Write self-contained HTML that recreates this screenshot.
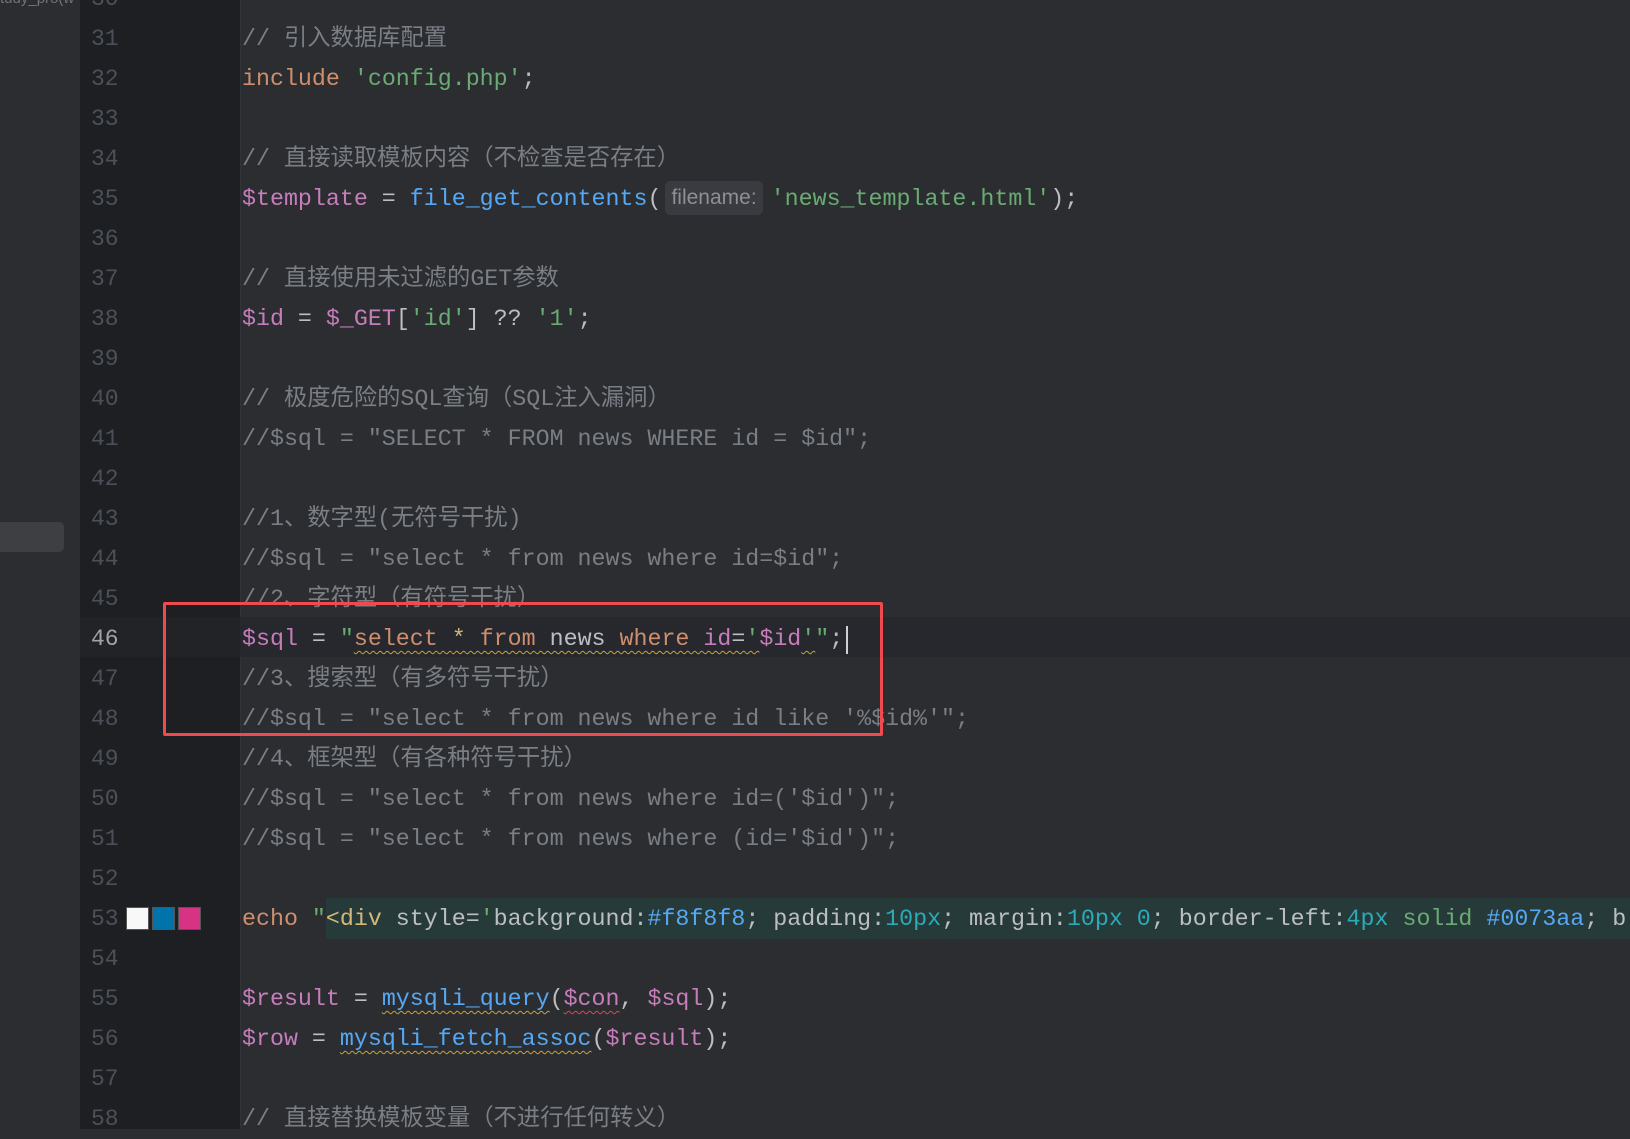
<!DOCTYPE html>
<html><head><meta charset="utf-8">
<style>
html,body{margin:0;padding:0;}
body{width:1630px;height:1129px;overflow:hidden;background:#2b2d30;position:relative;font-family:"Liberation Mono","Noto Sans CJK SC",monospace;}
#left{position:absolute;left:0;top:0;width:80px;height:1129px;background:#2b2d30;}
#sel{position:absolute;left:0;top:522px;width:64px;height:30px;background:#3e3f43;border-radius:0 5px 5px 0;}
#gut{position:absolute;left:80px;top:0;width:160px;height:1129px;background:#1e1f22;border-right:1px solid #313338;}
#cur{position:absolute;left:80px;top:617px;width:1550px;height:40px;background:#26282d;}
#cur2{position:absolute;left:80px;top:617px;width:160px;height:40px;background:#222327;}
#hl53{position:absolute;left:326px;top:898px;width:1304px;height:41px;background:#263a3a;}
#wrap{position:absolute;left:0;top:2px;width:1630px;height:1129px;}
.ln{position:absolute;left:91px;height:40px;line-height:40px;font-size:23px;color:#4b5059;}
.cl{position:absolute;left:242px;height:40px;line-height:40px;font-size:23.3px;color:#bcbec4;white-space:pre;}
.c{color:#7a7e85}.k{color:#cf8e6d}.s{color:#6aab73}.v{color:#c77dbb}.f{color:#56a8f5}.n{color:#2aacb8}.t{color:#d5b778}
.w{text-decoration:underline wavy #c5a33b;text-decoration-thickness:1px;text-underline-offset:5px}
.wr{text-decoration:underline wavy #d5485a;text-decoration-thickness:1px;text-underline-offset:5px}
.hint{display:inline-block;font-family:"Liberation Sans",sans-serif;font-size:21px;color:#8c8f94;background:#393b40;border-radius:5px;line-height:34px;padding:0 6px;margin:0 8px 0 4px;vertical-align:1px}
#box{position:absolute;left:163px;top:600px;width:714px;height:128px;border:3px solid #f04a4e;border-radius:2px;}
.sq{position:absolute;top:905px;width:21px;height:21px;border:1px solid #555;}
#caret{position:absolute;left:846px;top:624px;width:2px;height:28px;background:#ced0d6;}
#top{position:absolute;left:0;top:-10px;font-family:"Liberation Sans",sans-serif;font-size:15px;color:#6f737a;}
</style></head><body>
<div id="left"><div id="sel"></div><div id="top">tudy_pro(w</div></div>
<div id="gut"></div>
<div id="cur"></div><div id="cur2"></div>
<div id="hl53"></div>
<div id="wrap">
<div class="ln" style="top:-23px">30</div>
<div class="ln" style="top:17px">31</div>
<div class="ln" style="top:57px">32</div>
<div class="ln" style="top:97px">33</div>
<div class="ln" style="top:137px">34</div>
<div class="ln" style="top:177px">35</div>
<div class="ln" style="top:217px">36</div>
<div class="ln" style="top:257px">37</div>
<div class="ln" style="top:297px">38</div>
<div class="ln" style="top:337px">39</div>
<div class="ln" style="top:377px">40</div>
<div class="ln" style="top:417px">41</div>
<div class="ln" style="top:457px">42</div>
<div class="ln" style="top:497px">43</div>
<div class="ln" style="top:537px">44</div>
<div class="ln" style="top:577px">45</div>
<div class="ln" style="top:617px;color:#a1a3ab">46</div>
<div class="ln" style="top:657px">47</div>
<div class="ln" style="top:697px">48</div>
<div class="ln" style="top:737px">49</div>
<div class="ln" style="top:777px">50</div>
<div class="ln" style="top:817px">51</div>
<div class="ln" style="top:857px">52</div>
<div class="ln" style="top:897px">53</div>
<div class="ln" style="top:937px">54</div>
<div class="ln" style="top:977px">55</div>
<div class="ln" style="top:1017px">56</div>
<div class="ln" style="top:1057px">57</div>
<div class="ln" style="top:1097px">58</div>

<div class="sq" style="left:126px;background:#f8f8f8"></div>
<div class="sq" style="left:152px;background:#0073aa"></div>
<div class="sq" style="left:178px;background:#d63384"></div>

<div class="cl c" style="top:17px">// 引入数据库配置</div>
<div class="cl" style="top:57px"><span class="k">include</span> <span class="s">'config.php'</span>;</div>
<div class="cl c" style="top:137px">// 直接读取模板内容（不检查是否存在）</div>
<div class="cl" style="top:177px"><span class="v">$template</span> = <span class="f">file_get_contents</span>(<span class="hint">filename:</span><span class="s">'news_template.html'</span>);</div>
<div class="cl c" style="top:257px">// 直接使用未过滤的GET参数</div>
<div class="cl" style="top:297px"><span class="v">$id</span> = <span class="v">$_GET</span>[<span class="s">'id'</span>] ?? <span class="s">'1'</span>;</div>
<div class="cl c" style="top:377px">// 极度危险的SQL查询（SQL注入漏洞）</div>
<div class="cl c" style="top:417px">//$sql = "SELECT * FROM news WHERE id = $id";</div>
<div class="cl c" style="top:497px">//1、数字型(无符号干扰)</div>
<div class="cl c" style="top:537px">//$sql = "select * from news where id=$id";</div>
<div class="cl c" style="top:577px">//2、字符型（有符号干扰）</div>
<div class="cl" style="top:617px"><span class="v">$sql</span> = <span class="s">"</span><span class="w"><span class="k">select</span> <span class="t">*</span> <span class="k">from</span> news <span class="k">where</span> <span class="v">id</span>=<span class="s">'</span></span><span class="v">$id</span><span class="s w">'</span><span class="s">"</span>;</div>
<div class="cl c" style="top:657px">//3、搜索型（有多符号干扰）</div>
<div class="cl c" style="top:697px">//$sql = "select * from news where id like '%$id%'";</div>
<div class="cl c" style="top:737px">//4、框架型（有各种符号干扰）</div>
<div class="cl c" style="top:777px">//$sql = "select * from news where id=('$id')";</div>
<div class="cl c" style="top:817px">//$sql = "select * from news where (id='$id')";</div>
<div class="cl" style="top:897px"><span class="k">echo</span> <span class="s">"</span><span class="t">&lt;div</span> style=<span class="s">'</span>background:<span class="f">#f8f8f8</span>; padding:<span class="n">10px</span>; margin:<span class="n">10px 0</span>; border-left:<span class="n">4px</span> <span class="s">solid</span> <span class="f">#0073aa</span>; b</div>
<div class="cl" style="top:977px"><span class="v">$result</span> = <span class="f w">mysqli_query</span>(<span class="v wr">$con</span>, <span class="v">$sql</span>);</div>
<div class="cl" style="top:1017px"><span class="v">$row</span> = <span class="f w">mysqli_fetch_assoc</span>(<span class="v">$result</span>);</div>
<div class="cl c" style="top:1097px">// 直接替换模板变量（不进行任何转义）</div>

<div id="caret"></div>
<div id="box"></div>
</div>
</body></html>
